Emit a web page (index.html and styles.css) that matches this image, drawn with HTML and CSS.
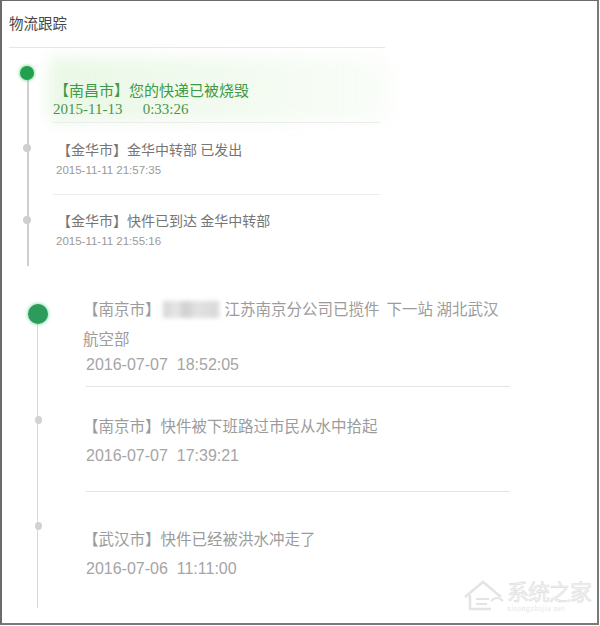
FILE: index.html
```html
<!DOCTYPE html>
<html lang="zh-CN">
<head>
  <meta charset="UTF-8" />
  <meta name="viewport" content="width=device-width, initial-scale=1.0" />
  <title>物流跟踪</title>
  <link rel="stylesheet" href="styles.css">
</head>
<body>
  <div class="frame">

    <!-- 第一张截图：小的物流跟踪 -->
    <section class="small">
      <h2 class="small-title">物流跟踪</h2>
      <ul class="small-list">
        <li class="small-item small-item-active">
          <div class="small-text">【南昌市】您的快递已被烧毁</div>
          <div class="small-time">2015-11-13 &nbsp; 0:33:26</div>
        </li>
        <li class="small-item">
          <div class="small-text">【金华市】金华中转部 已发出</div>
          <div class="small-time">2015-11-11 21:57:35</div>
        </li>
        <li class="small-item small-item-last">
          <div class="small-text">【金华市】快件已到达 金华中转部</div>
          <div class="small-time">2015-11-11 21:55:16</div>
        </li>
      </ul>
    </section>

    <!-- 第二张截图：大的物流跟踪 -->
    <section class="big">
      <ul class="big-list">
        <li class="big-item big-item-first">
          <div class="big-text">【南京市】<span class="blurred"></span>江苏南京分公司已揽件&nbsp; 下一站 湖北武汉航空部</div>
          <div class="big-time">2016-07-07&nbsp; 18:52:05</div>
        </li>
        <li class="big-item big-item-mid">
          <div class="big-text">【南京市】快件被下班路过市民从水中拾起</div>
          <div class="big-time">2016-07-07&nbsp; 17:39:21</div>
        </li>
        <li class="big-item big-item-last">
          <div class="big-text">【武汉市】快件已经被洪水冲走了</div>
          <div class="big-time">2016-07-06&nbsp; 11:11:00</div>
        </li>
      </ul>
    </section>

    <!-- 水印 -->
    <div class="watermark">
      <svg class="watermark-logo" width="44" height="36" viewBox="0 0 44 36">
        <path d="M4 20 L22 5 L40 20" fill="none" stroke="#e4e4e4" stroke-width="2.5" />
        <path d="M9 18 V32 H30" fill="none" stroke="#e4e4e4" stroke-width="2.5" />
        <path d="M15 22 H28 M15 27 H26" fill="none" stroke="#e4e4e4" stroke-width="2" />
        <path d="M30 24 q6 -6 12 0" fill="none" stroke="#e4e4e4" stroke-width="2" />
      </svg>
      <div class="watermark-text">
        <div class="watermark-name">系统之家</div>
        <div class="watermark-url">xitongzhijia.net</div>
      </div>
    </div>

  </div>
</body>
</html>
```

FILE: styles.css
```css
* {
  box-sizing: border-box;
}

body {
  margin: 0;
  background-color: #fff;
  font-family: "Noto Sans CJK SC", sans-serif;
}

.frame {
  position: relative;
  width: 599px;
  height: 625px;
  border-left: 2px solid #6b6b6b;
  border-top: 1px solid #6b6b6b;
  border-right: 2px solid #7a7a7a;
  border-bottom: 2px solid #7a7a7a;
  overflow: hidden;
}

ul {
  list-style: none;
  margin: 0;
  padding: 0;
}

/* 小截图 */
.small {
  width: 388px;
  padding: 0 5px 0 7px;
}

.small-title {
  margin: 0;
  padding: 12px 0 14px;
  font-size: 14.5px;
  font-weight: normal;
  line-height: 20px;
  color: #474747;
  border-bottom: 1px solid #e6e6e6;
}

.small-list {
  position: relative;
  padding-left: 44px;
}

.small-list::before {
  content: "";
  position: absolute;
  left: 18px;
  top: 25px;
  bottom: 0;
  width: 2px;
  background-color: #cfcfcf;
}

.small-item {
  position: relative;
  padding: 16px 0 16px;
  margin-right: 5px;
  border-bottom: 1px solid #ececec;
}

.small-item::before {
  content: "";
  position: absolute;
  left: -30px;
  top: 21px;
  width: 8px;
  height: 8px;
  border-radius: 50%;
  background-color: #cfcfcf;
}

.small-item-active {
  padding: 32px 0 3px;
}

.small-item-active::before {
  left: -33px;
  top: 18px;
  width: 14px;
  height: 14px;
  background-color: #22a04e;
  box-shadow: 0 0 3px 1px rgba(90, 200, 120, 0.6);
  z-index: 1;
}

.small-item-active::after {
  content: "";
  position: absolute;
  left: -4px;
  right: -10px;
  top: 10px;
  bottom: 0;
  background: linear-gradient(to right, rgba(212, 240, 204, 0.5), rgba(230, 246, 225, 0.2));
  filter: blur(8px);
  z-index: -1;
}

.small-item-last {
  padding: 15px 0 17px;
  border-bottom: none;
}

.small-text {
  font-size: 14px;
  line-height: 20px;
  color: #767676;
  padding-left: 4px;
}

.small-time {
  margin-top: 3px;
  font-family: "Liberation Sans", Arial, sans-serif;
  font-size: 11.5px;
  line-height: 16px;
  color: #9a9a9a;
  padding-left: 3px;
}

.small-item-active .small-text {
  font-size: 15px;
  color: #3f9a45;
  padding-left: 1px;
}

.small-item-active .small-time {
  margin-top: 0;
  font-family: "Liberation Serif", "Times New Roman", serif;
  font-size: 15px;
  line-height: 19px;
  color: #4b954b;
  padding-left: 0;
  word-spacing: 3px;
}

/* 大截图 */
.big-list {
  position: relative;
  padding: 0 0 26px 84px;
}

.big-list::before {
  content: "";
  position: absolute;
  left: 35px;
  top: 48px;
  bottom: 0;
  width: 1px;
  background-color: #d9d9d9;
}

.big-item {
  position: relative;
  width: 424px;
  border-bottom: 1px solid #e4e4e4;
}

.big-item::before {
  content: "";
  position: absolute;
  left: -51px;
  width: 7px;
  height: 8px;
  border-radius: 50%;
  background-color: #d2d2d2;
}

.big-item-first {
  padding: 27px 0 9px;
}

.big-item-first::before {
  left: -58px;
  top: 38px;
  width: 20px;
  height: 20px;
  background-color: #2c9c5c;
  box-shadow: 0 0 3px 1px rgba(90, 210, 140, 0.55);
  z-index: 1;
}

.big-item-mid {
  padding: 23px 0 22px;
}

.big-item-mid::before {
  top: 29px;
}

.big-item-last {
  padding: 31px 0 0;
  border-bottom: none;
}

.big-item-last::before {
  top: 30px;
}

.big-text {
  width: 420px;
  margin-left: -3px;
  font-size: 15.5px;
  line-height: 30px;
  color: #9c9c9c;
}

.blurred {
  display: inline-block;
  width: 56px;
  height: 17px;
  margin: 0 6px 0 2px;
  vertical-align: -3px;
  background: linear-gradient(to right, #d6d6d6 0%, #e6e6e6 25%, #cfcfcf 40%, #e2e2e2 60%, #d8d8d8 100%);
  filter: blur(2px);
}

.big-time {
  margin-top: 3px;
  font-family: "Liberation Sans", Arial, sans-serif;
  font-size: 16px;
  line-height: 26px;
  color: #a5a5a5;
}

.big-item-first .big-time {
  margin-top: -1px;
  line-height: 25px;
}

/* 水印 */
.watermark {
  position: absolute;
  right: 6px;
  bottom: 10px;
  display: flex;
  align-items: center;
  gap: 2px;
}

.watermark-name {
  font-size: 22px;
  line-height: 26px;
  color: #f4f4f4;
  -webkit-text-stroke: 0.6px #dedede;
  letter-spacing: -1px;
}

.watermark-url {
  margin-top: 1px;
  font-family: "Liberation Serif", serif;
  font-size: 8px;
  line-height: 9px;
  color: #e6e6e6;
  letter-spacing: 0.5px;
}
```
